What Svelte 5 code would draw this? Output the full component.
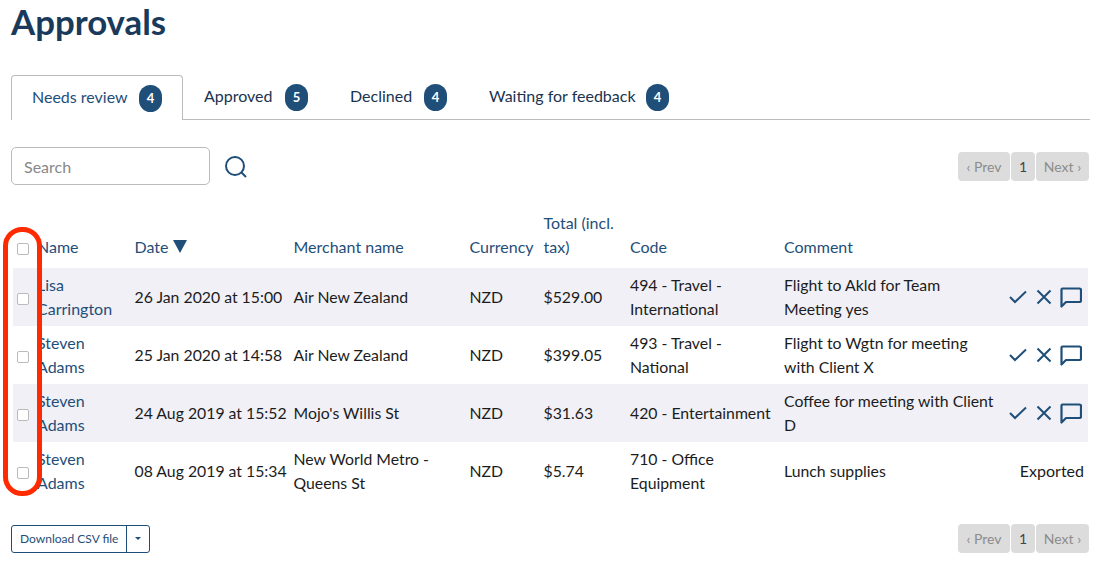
<script lang="ts">
    const tabs = [
        { label: "Needs review", count: 4, width: 172, active: true },
        { label: "Approved", count: 5, width: 146, active: false },
        { label: "Declined", count: 4, width: 139, active: false },
        { label: "Waiting for feedback", count: 4, width: 222, active: false },
    ];

    const columns = ["Date", "Merchant name", "Currency", "Total (incl. tax)", "Code", "Comment"];

    const rows = [
        { name: "Lisa Carrington", date: "26 Jan 2020 at 15:00", merchant: "Air New Zealand", total: "$529.00", code: "494 - Travel - International", comment: "Flight to Akld for Team Meeting yes", exported: false },
        { name: "Steven Adams", date: "25 Jan 2020 at 14:58", merchant: "Air New Zealand", total: "$399.05", code: "493 - Travel - National", comment: "Flight to Wgtn for meeting with Client X", exported: false },
        { name: "Steven Adams", date: "24 Aug 2019 at 15:52", merchant: "Mojo's Willis St", total: "$31.63", code: "420 - Entertainment", comment: "Coffee for meeting with Client D", exported: false },
        { name: "Steven Adams", date: "08 Aug 2019 at 15:34", merchant: "New World Metro - Queens St", total: "$5.74", code: "710 - Office Equipment", comment: "Lunch supplies", exported: true },
    ];
</script>

{#snippet pager()}
    <div class="pager">
        <span class="page-btn">‹ Prev</span>
        <span class="page-btn current">1</span>
        <span class="page-btn">Next ›</span>
    </div>
{/snippet}

<main class="page">
    <h1>Approvals</h1>

    <nav class="tabs">
        {#each tabs as tab}
            <div class="tab" class:active={tab.active} style="width: {tab.width}px">
                <span class="tab-label">{tab.label}</span>
                <span class="badge">{tab.count}</span>
            </div>
        {/each}
    </nav>

    <div class="toolbar">
        <input class="search" placeholder="Search" />
        <svg class="search-icon" viewBox="0 0 24 24" width="24" height="24" fill="none" stroke="#1f4e79" stroke-width="2">
            <circle cx="11" cy="11" r="9"></circle>
            <path d="M17.5 17.5 L22 22"></path>
        </svg>
        <div class="spacer"></div>
        {@render pager()}
    </div>

    <table>
        <colgroup>
            <col style="width: 18px" />
            <col style="width: 97.5px" />
            <col style="width: 159px" />
            <col style="width: 176px" />
            <col style="width: 74px" />
            <col style="width: 86.5px" />
            <col style="width: 154px" />
            <col style="width: 224px" />
            <col style="width: 86px" />
        </colgroup>
        <thead>
            <tr>
                <th class="check"><span class="box"></span></th>
                <th>Name</th>
                {#each columns as col}
                    <th>
                        {col}
                        {#if col === "Date"}
                            <svg class="sort" viewBox="0 0 14 13" width="14" height="13"><path d="M0 0 H14 L7 13 Z" fill="#1f4e79"></path></svg>
                        {/if}
                    </th>
                {/each}
                <th></th>
            </tr>
        </thead>
        <tbody>
            {#each rows as row}
                <tr>
                    <td class="check"><span class="box"></span></td>
                    <td class="name">{row.name}</td>
                    <td class="date">{row.date}</td>
                    <td>{row.merchant}</td>
                    <td>NZD</td>
                    <td>{row.total}</td>
                    <td>{row.code}</td>
                    <td>{row.comment}</td>
                    <td class="actions">
                        {#if row.exported}
                            Exported
                        {:else}
                            <div class="icons">
                                <svg viewBox="0 0 20 14" width="20" height="14" fill="none" stroke="#1f4e79" stroke-width="2"><path d="M2 7 L7 12 L18 1.5"></path></svg>
                                <svg viewBox="0 0 16 16" width="16" height="16" fill="none" stroke="#1f4e79" stroke-width="2"><path d="M1.5 1.5 L14.5 14.5 M14.5 1.5 L1.5 14.5"></path></svg>
                                <svg viewBox="0 0 22 21" width="22" height="21" fill="none" stroke="#1f4e79" stroke-width="2.2" stroke-linejoin="round"><path d="M2.5 1.5 H19.5 Q21 1.5 21 3 V13.5 Q21 15 19.5 15 H6 L1.5 19.5 V2.5 Q1.5 1.5 2.5 1.5 Z"></path></svg>
                            </div>
                        {/if}
                    </td>
                </tr>
            {/each}
        </tbody>
    </table>

    <div class="footer">
        <div class="download">
            <span class="download-label">Download CSV file</span>
            <span class="caret"></span>
        </div>
        <div class="spacer"></div>
        {@render pager()}
    </div>

    <div class="highlight"></div>
</main>

<style>
    :global(body) {
        margin: 0;
        background: #fff;
    }

    .page {
        position: relative;
        box-sizing: border-box;
        width: 1100px;
        height: 564px;
        overflow: hidden;
        padding: 0 10px 0 11px;
        font-family: Lato, "Liberation Sans", sans-serif;
        font-size: 16px;
        line-height: 24px;
        color: #1c1c1c;
    }

    h1 {
        margin: 0;
        padding-top: 2px;
        height: 75px;
        box-sizing: border-box;
        font-size: 34.8px;
        line-height: 40px;
        font-weight: 700;
        color: #1a3a5c;
    }

    .tabs {
        display: flex;
        height: 44px;
        border-bottom: 1px solid #bbb;
    }

    .tab {
        display: flex;
        align-items: center;
        justify-content: space-between;
        height: 44px;
        box-sizing: border-box;
        padding: 0 21px;
        color: #1a3350;
    }

    .tab-label {
        padding-bottom: 3px;
    }

    .tab.active {
        height: 45px;
        padding: 0 20px;
        background: #fff;
        border: 1px solid #bbb;
        border-bottom: none;
        border-radius: 4px 4px 0 0;
        color: #1f4e79;
    }

    .badge {
        display: flex;
        align-items: center;
        justify-content: center;
        width: 23px;
        height: 27px;
        border-radius: 11.5px;
        background: #1f4e79;
        color: #fff;
        font-size: 13px;
        font-weight: 700;
    }

    .toolbar {
        display: flex;
        align-items: center;
        margin-top: 27px;
        height: 38px;
    }

    .search {
        box-sizing: border-box;
        width: 199px;
        height: 38px;
        padding: 0 12px;
        border: 1px solid #bbb;
        border-radius: 5px;
        font-family: inherit;
        font-size: 16px;
        outline: none;
    }

    .search::placeholder {
        color: #888;
    }

    .search-icon {
        margin: 2px 0 0 14px;
    }

    .spacer {
        flex: 1;
    }

    .pager {
        display: flex;
        gap: 1px;
        margin-right: 1px;
    }

    .page-btn {
        display: flex;
        align-items: center;
        justify-content: center;
        box-sizing: border-box;
        width: 52px;
        height: 29px;
        padding-top: 1px;
        background: #dcdcdc;
        border-radius: 4px;
        font-size: 14px;
        color: #8c8c8c;
    }

    .page-btn.current {
        width: 24px;
        color: #444;
    }

    .page-btn:last-child {
        width: 53px;
    }

    table {
        table-layout: fixed;
        width: 1075px;
        margin: 26px 0 0 2px;
        border-collapse: collapse;
    }

    th {
        padding: 0 6px 9px;
        text-align: left;
        vertical-align: bottom;
        font-weight: 400;
        color: #1f4e79;
    }

    td {
        padding: 5px 5px 5px 6px;
        vertical-align: middle;
        font-size: 15.8px;
    }

    tbody tr:nth-child(odd) {
        background: #f0f0f6;
    }

    .check {
        padding: 3px 0 0 4px;
    }

    th.check {
        padding: 0 0 13px 4px;
    }

    .box {
        display: block;
        box-sizing: border-box;
        width: 12px;
        height: 12px;
        border: 1px solid #bbb;
        border-radius: 2px;
        background: #fff;
    }

    .name {
        color: #1f4e79;
        font-size: 16px;
    }

    .date {
        white-space: nowrap;
    }

    .actions {
        padding: 5px 4px 5px 0;
        text-align: right;
        font-size: 16px;
    }

    .icons {
        display: flex;
        justify-content: flex-end;
        align-items: center;
        gap: 8px;
        margin-right: 2px;
    }

    .footer {
        display: flex;
        align-items: center;
        margin-top: 24px;
        height: 29px;
    }

    .download {
        display: flex;
        align-items: stretch;
        box-sizing: border-box;
        height: 28px;
        border: 1px solid #1f4e79;
        border-radius: 3px;
        color: #1f4e79;
        font-size: 12px;
        line-height: 26px;
    }

    .download-label {
        padding: 0 8px;
        border-right: 1px solid #1f4e79;
    }

    .caret {
        position: relative;
        width: 22px;
    }

    .caret::after {
        content: "";
        position: absolute;
        left: 8px;
        top: 11px;
        border-left: 3px solid transparent;
        border-right: 3px solid transparent;
        border-top: 3.5px solid #1f4e79;
    }

    .highlight {
        position: absolute;
        left: 3px;
        top: 227px;
        width: 39px;
        height: 269px;
        box-sizing: border-box;
        border: 5px solid #ff2a00;
        border-radius: 19px;
        pointer-events: none;
    }
</style>
